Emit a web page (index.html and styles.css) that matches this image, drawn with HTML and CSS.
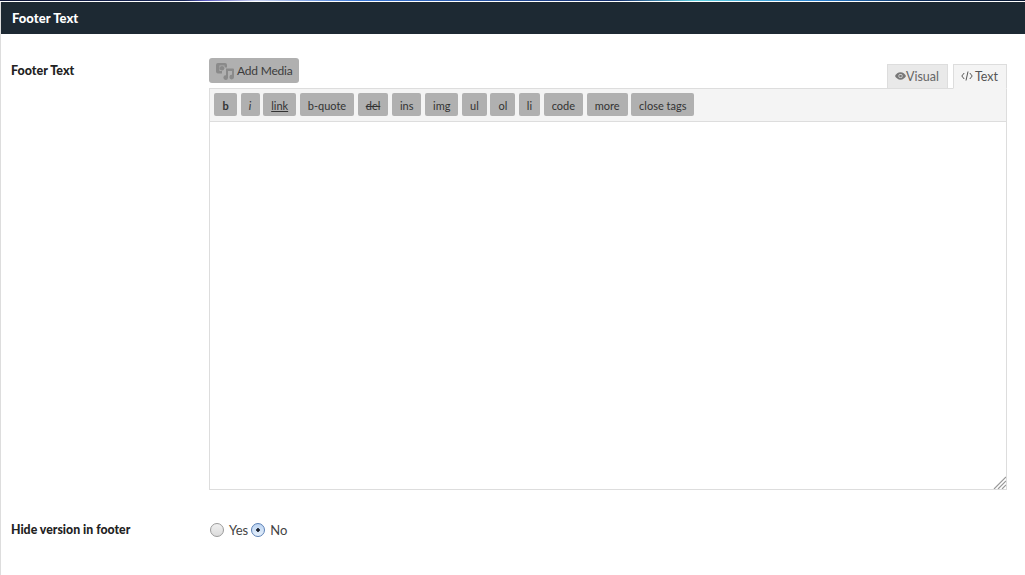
FILE: index.html
```html
<!DOCTYPE html>
<html lang="en">
<head>
<meta charset="utf-8">
<title>Footer Text</title>
<link rel="stylesheet" href="styles.css">
</head>
<body>
<div class="strip"></div>
<main class="panel">
  <h2 class="panel-title">Footer Text</h2>
  <div class="row row-editor">
    <label class="row-label">Footer Text</label>
    <div class="field">
      <div class="editor-head">
        <button class="media-btn" type="button">
          <svg class="media-icon" viewBox="0 0 18 18" width="18" height="18" aria-hidden="true">
            <path fill="#8a8a8a" d="M2 1h7a2 2 0 0 1 2 2v2.500H8.500V3.500h-5v5.500H6v2.500H2a2 2 0 0 1-2-2V3a2 2 0 0 1 2-2z"/>
            <circle cx="6" cy="6.300" r="2.300" fill="#8a8a8a"/>
            <path fill="#8a8a8a" d="M10 6.500h7a1 1 0 0 1 1 1v7.500a2.300 2.300 0 1 1-2-2.200V9h-4v6.500a2.300 2.300 0 1 1-2-2.200z"/>
          </svg>
          <span class="media-label">Add Media</span>
        </button>
        <div class="tabs">
          <span class="tab tab-visual">
            <svg viewBox="0 0 12 8" width="11" height="8" aria-hidden="true"><path fill="#777" d="M6 0C3.300 0 1.200 1.700 0 4c1.200 2.300 3.300 4 6 4s4.800-1.700 6-4C10.800 1.700 8.700 0 6 0z"/><circle cx="6" cy="4" r="2.300" fill="#e9e9e9"/><circle cx="6" cy="4" r="1.500" fill="#777"/></svg>Visual
          </span>
          <span class="tab tab-text">
            <svg viewBox="0 0 12 10" width="12" height="10" aria-hidden="true"><path fill="none" stroke="#555" stroke-width="1" d="M3.200 2 .8 5l2.400 3M8.800 2l2.400 3-2.400 3M7 .5 5 9.500"/></svg>Text
          </span>
        </div>
      </div>
      <div class="toolbar">
        <button class="tool tool-b" type="button">b</button>
        <button class="tool tool-i" type="button">i</button>
        <button class="tool tool-link" type="button">link</button>
        <button class="tool" type="button">b-quote</button>
        <button class="tool tool-del" type="button">del</button>
        <button class="tool" type="button">ins</button>
        <button class="tool" type="button">img</button>
        <button class="tool" type="button">ul</button>
        <button class="tool" type="button">ol</button>
        <button class="tool" type="button">li</button>
        <button class="tool" type="button">code</button>
        <button class="tool" type="button">more</button>
        <button class="tool" type="button">close tags</button>
      </div>
      <div class="textarea-box">
        <svg class="grip" viewBox="0 0 13 13" width="13" height="13" aria-hidden="true"><path stroke="#999" stroke-width="1.200" d="M1 13 13 1M5 13l8-8M9 13l4-4"/></svg>
      </div>
    </div>
  </div>
  <div class="row row-radio">
    <label class="row-label">Hide version in footer</label>
    <div class="radios">
      <span class="radio"></span><span class="radio-text">Yes</span>
      <span class="radio radio-on"></span><span class="radio-text">No</span>
    </div>
  </div>
</main>
</body>
</html>
```

FILE: styles.css
```css
* { box-sizing: border-box; }
html, body { margin: 0; height: 100%; }
body {
  background: #fff;
  font-family: Lato, "Liberation Sans", sans-serif;
  font-size: 13px;
  color: #444;
  overflow: hidden;
}
.strip {
  height: 1px;
  background: linear-gradient(90deg, #10183a 0, #1b2a5c 18%, #5a5ac0 20%, #c8d0f0 25%, #3a78d8 35%, #173070 60%, #60d0e0 68%, #2a80d0 80%, #103060 90%, #0c1a34 100%);
}
.panel {
  margin-top: 1px;
  height: 573px;
  border-left: 1px solid #ddd;
}
.panel-title {
  margin: 0;
  height: 32px;
  padding-left: 11px;
  background: #1d2933;
  color: #fff;
  font-size: 13px;
  font-weight: 900;
  line-height: 32px;
  letter-spacing: 0.050px;
}
.row { display: flex; padding-left: 10px; padding-right: 18px; }
.row-label {
  flex: 0 0 198px;
  font-size: 12.500px;
  font-weight: 900;
  color: #222;
}
.row-editor { padding-top: 24px; }
.row-editor .row-label { padding-top: 5px; line-height: 16px; }
.field { flex: 1; min-width: 0; }
.editor-head { display: flex; justify-content: space-between; height: 30px; }
.media-btn {
  display: flex;
  align-items: center;
  gap: 3px;
  height: 25px;
  width: 90px;
  padding: 0 0 0 7px;
  border: 0;
  border-radius: 3px;
  background: #b0b0b0;
  color: #3c3c3c;
  font: 12px Lato, "Liberation Sans", sans-serif;
  letter-spacing: -0.200px;
}
.media-label { white-space: nowrap; }
.tabs { display: flex; gap: 5px; align-items: flex-end; }
.tab {
  display: flex;
  align-items: center;
  gap: 0;
  height: 25px;
  padding: 0 0 1px 7px;
  border: 1px solid #ddd;
  font-size: 12.500px;
  margin-bottom: -1px;
  position: relative;
}
.tab-visual { width: 61px; background: #e9e9e9; color: #666; border-bottom-color: #ddd; }
.tab-text { width: 54px; gap: 2px; background: #f4f4f4; color: #555; border-bottom-color: #f4f4f4; }
.toolbar {
  display: flex;
  gap: 3.600px;
  height: 34px;
  padding: 4px 4px 0;
  background: #f4f4f4;
  border: 1px solid #ddd;
}
.tool {
  height: 23px;
  padding: 2px 8px 0;
  border: 0;
  border-radius: 2px;
  background: #b0b0b0;
  color: #333;
  font: 11px/20px Lato, "Liberation Sans", sans-serif;
}
.tool-b { font-weight: 700; width: 23px; padding: 2px 0 0; }
.tool-i { font-style: italic; width: 19px; padding: 2px 0 0; }
.tool-link { text-decoration: underline; }
.tool-del { text-decoration: line-through; }
.textarea-box {
  position: relative;
  height: 368px;
  border: 1px solid #ddd;
  border-top: 0;
  background: #fff;
}
.grip { position: absolute; right: 0; bottom: 0; }
.row-radio { padding-top: 32px; align-items: center; }
.row-radio .row-label { font-size: 12.300px; line-height: 16px; }
.radios { display: flex; align-items: center; padding-left: 1px; }
.radio {
  width: 14px;
  height: 14px;
  border-radius: 50%;
  border: 1px solid #9a9a9a;
  background: linear-gradient(#f0f0f0, #dcdcdc);
}
.radio-on {
  position: relative;
  border-color: #5a7fb5;
  background: radial-gradient(circle, #1a2230 0 1.500px, transparent 2px), linear-gradient(#bcd4f2, #e6f0fb);
}
.radio-text { margin-left: 5px; margin-right: 3px; font-size: 13px; color: #444; }
.radio-text:last-child { margin-left: 5px; }
```
